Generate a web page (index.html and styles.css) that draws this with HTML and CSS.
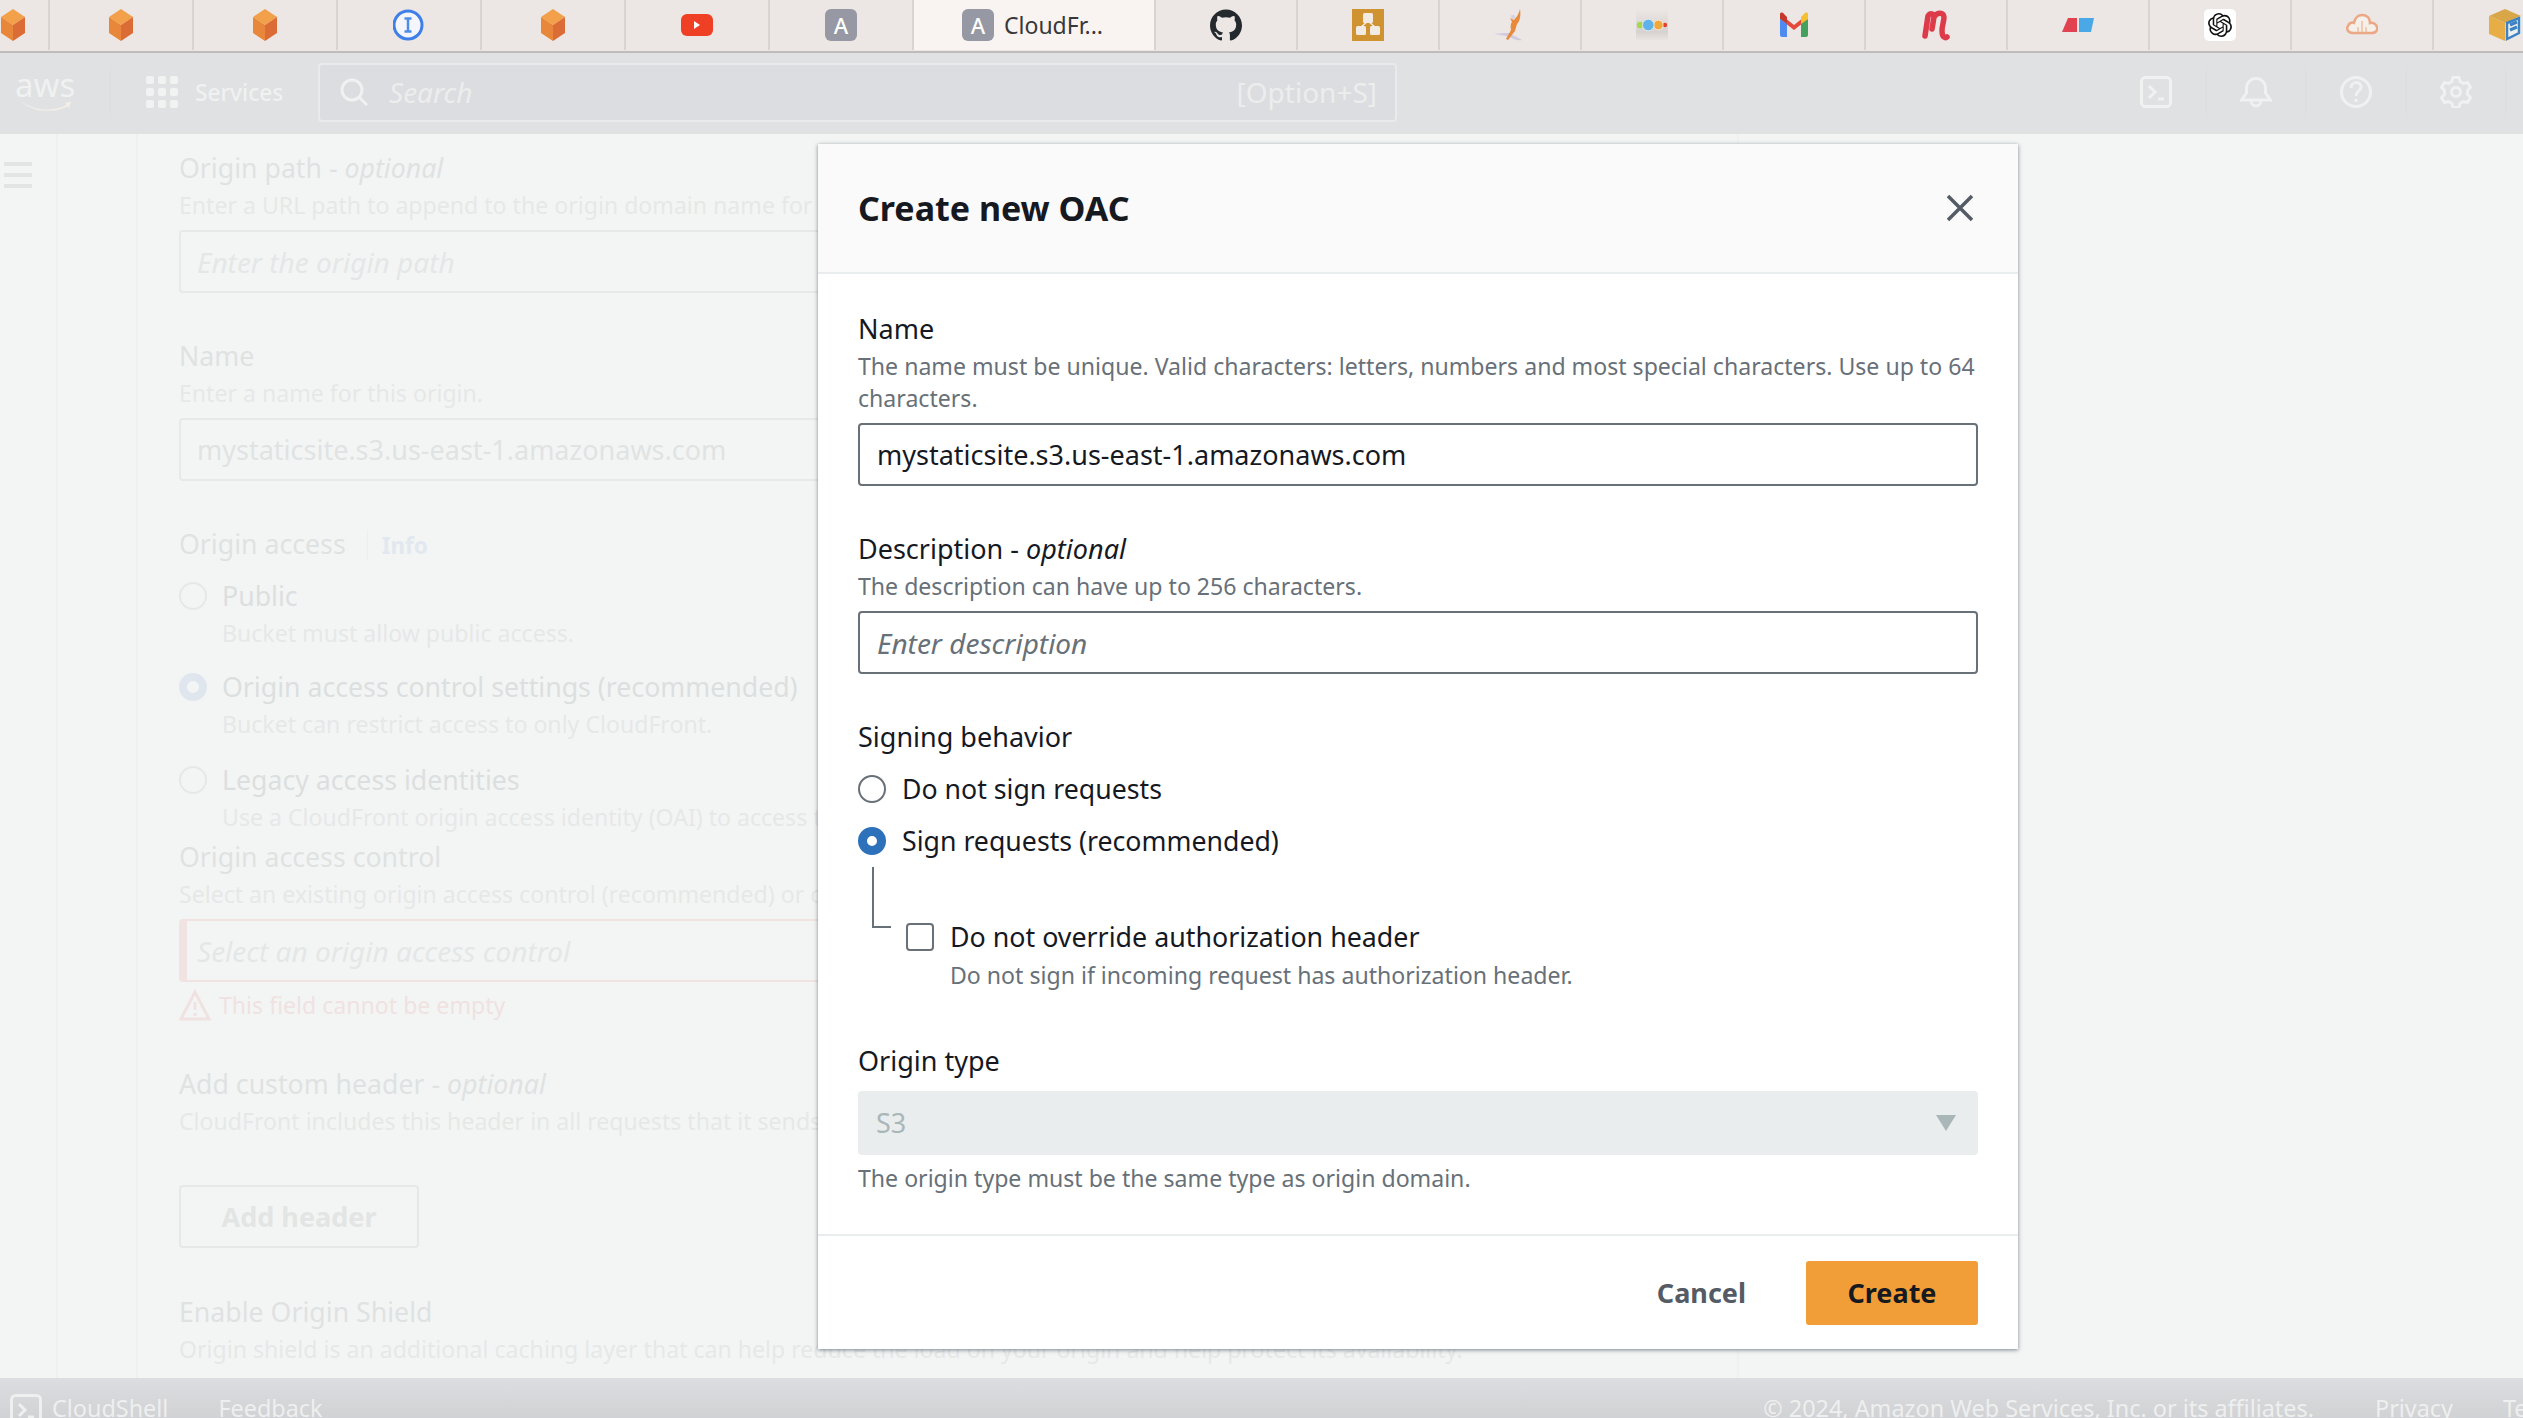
FILE: index.html
```html
<!DOCTYPE html>
<html lang="en">

<head>
    <meta charset="UTF-8">
    <meta name="viewport" content="width=device-width, initial-scale=1.0">
    <title>Create new OAC</title>
    <link rel="stylesheet" href="styles.css">
</head>

<body>
    <svg class="defs" width="0" height="0">
        <symbol id="cube" viewBox="0 0 32 32">
            <polygon points="16,0 28,8 16,16 4,8" fill="#f2a049"/>
            <polygon points="4,8 16,16 16,32 4,24" fill="#e8863a"/>
            <polygon points="28,8 16,16 16,32 28,24" fill="#dc6c35"/>
        </symbol>
    </svg>

    <!-- browser tabs -->
    <div class="tabs">
        <div class="tab tab-first"><svg class="tab-icon"><use href="#cube"/></svg></div>
        <div class="tab"><svg class="tab-icon"><use href="#cube"/></svg></div>
        <div class="tab"><svg class="tab-icon"><use href="#cube"/></svg></div>
        <div class="tab">
            <svg class="tab-icon" viewBox="0 0 32 32">
                <circle cx="15" cy="16" r="14" fill="#f4f6fb" stroke="#3f7fe8" stroke-width="3"/>
                <path d="M11.5 9.5h7M11.5 22.5h7M15 9.5v13" fill="none" stroke="#4f8ee8" stroke-width="2.5"/>
            </svg>
        </div>
        <div class="tab"><svg class="tab-icon"><use href="#cube"/></svg></div>
        <div class="tab">
            <svg class="tab-icon" viewBox="0 0 32 32">
                <rect x="0" y="5" width="32" height="22" rx="6" fill="#ef3f25"/>
                <polygon points="13,12 19,16 13,20" fill="#fff"/>
            </svg>
        </div>
        <div class="tab"><div class="badge">A</div></div>
        <div class="tab tab-active">
            <div class="badge">A</div>
            <span class="tab-title">CloudFr...</span>
        </div>
        <div class="tab tab-narrow">
            <svg class="tab-icon" viewBox="0 0 24 24">
                <path fill="#24292e" d="M12 .297c-6.63 0-12 5.373-12 12 0 5.303 3.438 9.8 8.205 11.385.6.113.82-.258.82-.577 0-.285-.01-1.04-.015-2.04-3.338.724-4.042-1.61-4.042-1.61C4.422 18.07 3.633 17.7 3.633 17.7c-1.087-.744.084-.729.084-.729 1.205.084 1.838 1.236 1.838 1.236 1.07 1.835 2.809 1.305 3.495.998.108-.776.417-1.305.76-1.605-2.665-.3-5.466-1.332-5.466-5.93 0-1.31.465-2.38 1.235-3.22-.135-.303-.54-1.523.105-3.176 0 0 1.005-.322 3.3 1.23.96-.267 1.98-.399 3-.405 1.02.006 2.04.138 3 .405 2.28-1.552 3.285-1.23 3.285-1.23.645 1.653.24 2.873.12 3.176.765.84 1.23 1.91 1.23 3.22 0 4.61-2.805 5.625-5.475 5.92.42.36.81 1.096.81 2.22 0 1.606-.015 2.896-.015 3.286 0 .315.21.69.825.57C20.565 22.092 24 17.592 24 12.297c0-6.627-5.373-12-12-12"/>
            </svg>
        </div>
        <div class="tab tab-narrow">
            <svg class="tab-icon" viewBox="0 0 32 32">
                <rect width="32" height="32" fill="#cf9431"/>
                <rect x="11" y="4" width="10" height="10" rx="1.5" fill="#f1ebe3"/>
                <rect x="4" y="17" width="10" height="9" rx="1.5" fill="#f1ebe3"/>
                <rect x="18" y="17" width="10" height="9" rx="1.5" fill="#f1ebe3"/>
                <path d="M16 12L9 18M16 12l7 6" stroke="#f1ebe3" stroke-width="1.5" fill="none"/>
            </svg>
        </div>
        <div class="tab tab-narrow">
            <svg class="tab-icon" viewBox="0 0 32 32">
                <path d="M0 25c6-1 11-1 15-1l13 7c-5 1-8-1-13-3-5-2-10-2-15-3z" fill="#cfcbe0"/>
                <path d="M26 0c1 6 0 12-3 15l-2 7-7 9-2-1 5-9c-1-4 0-7 1-8l-2-4 4 2c3-3 5-7 6-11z" fill="#e88a3a"/>
                <circle cx="19" cy="8" r="2.200" fill="#d6d2e4"/>
            </svg>
        </div>
        <div class="tab tab-narrow">
            <svg class="tab-icon" viewBox="0 0 32 32">
                <defs>
                    <linearGradient id="dots-fade" x1="0" y1="0" x2="0" y2="1">
                        <stop offset="0" stop-color="#ece6e4"/>
                        <stop offset="0.72" stop-color="#d6d2d0"/>
                        <stop offset="1" stop-color="#ece6e4"/>
                    </linearGradient>
                </defs>
                <rect width="32" height="32" fill="url(#dots-fade)"/>
                <circle cx="4" cy="16" r="3.200" fill="#a8d74f"/>
                <circle cx="29" cy="16" r="2.200" fill="#e2402d"/>
                <circle cx="22.300" cy="16" r="4.800" fill="#f0a83a" stroke="#f2eeea" stroke-width="0.8"/>
                <circle cx="12.300" cy="16" r="5.800" fill="#5fb2ea" stroke="#f2eeea" stroke-width="0.8"/>
            </svg>
        </div>
        <div class="tab tab-narrow">
            <svg class="tab-icon" viewBox="0 0 32 32">
                <path d="M2 5l14 11L30 5v5L16 21 2 10z" fill="#e5483a"/>
                <path d="M2 5c0-2 3-2 4 0l3 3v7L2 10z" fill="#c5382c"/>
                <path d="M2 10l7 5v13H4c-1 0-2-1-2-2z" fill="#4e8bf0"/>
                <path d="M30 10l-7 5v13h5c1 0 2-1 2-2z" fill="#44a05c"/>
                <path d="M30 5c0-2-3-2-4 0l-3 3v7l7-5z" fill="#f5bf32"/>
            </svg>
        </div>
        <div class="tab tab-narrow">
            <svg class="tab-icon" viewBox="0 0 32 32">
                <path d="M5 27L8 7c2-3 6-3 6 1l-2 12M14 8c3-5 10-5 10 0 0 6-4 13-1 19 1 2 3 2 4 1" fill="none" stroke="#dd3a4a" stroke-width="5.500" stroke-linecap="round" stroke-linejoin="round"/>
            </svg>
        </div>
        <div class="tab tab-narrow">
            <svg class="tab-icon" viewBox="0 0 32 32">
                <polygon points="6,9 15,9 15,23 0,23" fill="#e2424f"/>
                <polygon points="17,9 32,9 29,23 17,23" fill="#4aa8e6"/>
            </svg>
        </div>
        <div class="tab tab-narrow">
            <svg class="tab-icon" viewBox="-4 -4 32 32">
                <rect x="-4" y="-4" width="32" height="32" rx="5" fill="#fff"/>
                <path fill="#111" d="M22.2819 9.8211a5.9847 5.9847 0 0 0-.5157-4.9108 6.0462 6.0462 0 0 0-6.5098-2.9A6.0651 6.0651 0 0 0 4.9807 4.1818a5.9847 5.9847 0 0 0-3.9977 2.9 6.0462 6.0462 0 0 0 .7427 7.0966 5.98 5.98 0 0 0 .511 4.9107 6.051 6.051 0 0 0 6.5146 2.9001A5.9847 5.9847 0 0 0 13.2599 24a6.0557 6.0557 0 0 0 5.7718-4.2058 5.9894 5.9894 0 0 0 3.9977-2.9001 6.0557 6.0557 0 0 0-.7475-7.0729zm-9.022 12.6081a4.4755 4.4755 0 0 1-2.8764-1.0408l.1419-.0804 4.7783-2.7582a.7948.7948 0 0 0 .3927-.6813v-6.7369l2.02 1.1686a.071.071 0 0 1 .038.052v5.5826a4.504 4.504 0 0 1-4.4945 4.4944zm-9.6607-4.1254a4.4708 4.4708 0 0 1-.5346-3.0137l.142.0852 4.783 2.7582a.7712.7712 0 0 0 .7806 0l5.8428-3.3685v2.3324a.0804.0804 0 0 1-.0332.0615L9.74 19.9502a4.4992 4.4992 0 0 1-6.1408-1.6464zM2.3408 7.8956a4.485 4.485 0 0 1 2.3655-1.9728V11.6a.7664.7664 0 0 0 .3879.6765l5.8144 3.3543-2.0201 1.1685a.0757.0757 0 0 1-.071 0l-4.8303-2.7865A4.504 4.504 0 0 1 2.3408 7.872zm16.5963 3.8558L13.1038 8.364 15.1192 7.2a.0757.0757 0 0 1 .071 0l4.8303 2.7913a4.4944 4.4944 0 0 1-.6765 8.1042v-5.6772a.79.79 0 0 0-.407-.667zm2.0107-3.0231l-.142-.0852-4.7735-2.7818a.7759.7759 0 0 0-.7854 0L9.409 9.2297V6.8974a.0662.0662 0 0 1 .0284-.0615l4.8303-2.7866a4.4992 4.4992 0 0 1 6.6802 4.66zM8.3065 12.863l-2.02-1.1638a.0804.0804 0 0 1-.038-.0567V6.0742a4.4992 4.4992 0 0 1 7.3757-3.4537l-.142.0805L8.704 5.459a.7948.7948 0 0 0-.3927.6813zm1.0976-2.3654l2.602-1.4998 2.6069 1.4998v2.9994l-2.5974 1.4997-2.6067-1.4997Z"/>
            </svg>
        </div>
        <div class="tab tab-narrow">
            <svg class="tab-icon" viewBox="0 0 32 32">
                <path d="M7 24C2 24 0 20 2 17c1-3 4-4 6-3 1-6 5-8 8-8 5 0 8 3 8 8 3-1 6 1 7 4 1 4-2 6-5 6z" fill="#f6f0ea" stroke="#eba884" stroke-width="2.500"/>
                <path d="M12 23v-5M16 23V12M20 23v-5" stroke="#eec0a4" stroke-width="1.500"/>
            </svg>
        </div>
        <div class="tab tab-narrow tab-last">
            <svg class="tab-icon" viewBox="0 0 32 32">
                <polygon points="16,0 32,7 16,14 0,7" fill="#d9a648"/>
                <polygon points="0,7 16,14 16,32 0,25" fill="#e7ae48"/>
                <polygon points="32,7 16,14 16,32 32,25" fill="#eef0ee"/>
                <path d="M18 14l12-5v15l-12 6z" fill="none" stroke="#3d83c4" stroke-width="2.500"/>
                <path d="M21 16l7-3M21 21l7-3" stroke="#3d83c4" stroke-width="3"/>
            </svg>
        </div>
    </div>

    <!-- console nav -->
    <nav class="topnav">
        <div class="logo">
            <span class="logo-text">aws</span>
            <svg class="logo-smile" viewBox="0 0 60 16">
                <path d="M1 1c16 12 38 12 52 5l-1-3 7-1-3 7-1-2C41 15 15 15 1 1z" fill="#f3eee8"/>
            </svg>
        </div>
        <svg class="nav-grid" viewBox="0 0 32 32">
            <rect width="8" height="8" rx="2"/><rect x="12" width="8" height="8" rx="2"/><rect x="24" width="8" height="8" rx="2"/>
            <rect y="12" width="8" height="8" rx="2"/><rect x="12" y="12" width="8" height="8" rx="2"/><rect x="24" y="12" width="8" height="8" rx="2"/>
            <rect y="24" width="8" height="8" rx="2"/><rect x="12" y="24" width="8" height="8" rx="2"/><rect x="24" y="24" width="8" height="8" rx="2"/>
        </svg>
        <span class="nav-services">Services</span>
        <div class="search">
            <svg class="search-icon" viewBox="0 0 28 28">
                <circle cx="12" cy="12" r="10" fill="none" stroke="#f0f1f1" stroke-width="3"/>
                <path d="M19 19l8 8" stroke="#f0f1f1" stroke-width="3"/>
            </svg>
            <span class="search-text">Search</span>
            <span class="search-key">[Option+S]</span>
        </div>
        <div class="nav-actions">
            <div class="nav-cell">
                <svg class="nav-icon" viewBox="0 0 32 32">
                    <rect x="1.500" y="1.500" width="29" height="29" rx="4"/>
                    <path d="M9 10l6 6-6 6M18 23h6"/>
                </svg>
            </div>
            <div class="nav-cell">
                <svg class="nav-icon" viewBox="0 0 32 32">
                    <path d="M1.500 24h29l-5-7V12a9.500 9.500 0 0 0-19 0v5zM16 3V1M11 25a5 5 0 0 0 10 0"/>
                </svg>
            </div>
            <div class="nav-cell">
                <svg class="nav-icon" viewBox="0 0 32 32">
                    <circle cx="16" cy="16" r="14.500"/>
                    <path d="M11 12c0-7 10-7 10-1 0 4-5 4-5 9M16 23v3"/>
                </svg>
            </div>
            <div class="nav-cell">
                <svg class="nav-icon" viewBox="0 0 32 32">
                    <path d="M13 1.500h6l1 4 3.500 2 4-1 3 5-3 3v4l3 3-3 5-4-1-3.500 2-1 4h-6l-1-4-3.500-2-4 1-3-5 3-3v-4l-3-3 3-5 4 1 3.500-2z"/>
                    <circle cx="16" cy="16" r="4.500"/>
                </svg>
            </div>
        </div>
    </nav>

    <!-- page under the dialog -->
    <div class="page">
        <aside class="side">
            <div class="burger"><span></span><span></span><span></span></div>
        </aside>
        <div class="gutter"></div>
        <main class="content">
            <div class="bg-label">Origin path - <em>optional</em></div>
            <div class="bg-help">Enter a URL path to append to the origin domain name for your origin requests.</div>
            <div class="bg-input bg-placeholder">Enter the origin path</div>

            <div class="bg-label bg-gap">Name</div>
            <div class="bg-help">Enter a name for this origin.</div>
            <div class="bg-input">mystaticsite.s3.us-east-1.amazonaws.com</div>

            <div class="bg-label bg-gap">Origin access <span class="bg-info">Info</span></div>
            <div class="bg-radio bg-radio-first"><span class="bg-dot"></span>Public</div>
            <div class="bg-help bg-indent">Bucket must allow public access.</div>
            <div class="bg-radio"><span class="bg-dot bg-dot-on"></span>Origin access control settings (recommended)</div>
            <div class="bg-help bg-indent">Bucket can restrict access to only CloudFront.</div>
            <div class="bg-radio bg-radio-last"><span class="bg-dot"></span>Legacy access identities</div>
            <div class="bg-help bg-indent">Use a CloudFront origin access identity (OAI) to access the S3 bucket.</div>

            <div class="bg-label bg-tight">Origin access control</div>
            <div class="bg-help">Select an existing origin access control (recommended) or create a new control.</div>
            <div class="bg-input bg-error bg-placeholder">Select an origin access control</div>
            <div class="bg-warning">
                <svg class="bg-warning-icon" viewBox="0 0 32 32">
                    <path d="M16 3L2 30h28zM16 13v8M16 24v3" fill="none" stroke="#efe2e1" stroke-width="3"/>
                </svg>
                This field cannot be empty
            </div>

            <div class="bg-label bg-gap">Add custom header - <em>optional</em></div>
            <div class="bg-help">CloudFront includes this header in all requests that it sends to your origin.</div>
            <div class="bg-button">Add header</div>

            <div class="bg-label bg-gap-large">Enable Origin Shield</div>
            <div class="bg-help">Origin shield is an additional caching layer that can help reduce the load on your origin and help protect its availability.</div>
        </main>
    </div>

    <footer class="footer">
        <svg class="footer-icon" viewBox="0 0 32 32">
            <rect x="1.500" y="1.500" width="29" height="29" rx="4"/>
            <path d="M9 10l6 6-6 6M18 23h6"/>
        </svg>
        <span class="footer-shell">CloudShell</span>
        <span class="footer-feedback">Feedback</span>
        <span class="footer-copy">© 2024, Amazon Web Services, Inc. or its affiliates.</span>
        <span class="footer-privacy">Privacy</span>
        <span class="footer-terms">Terms</span>
    </footer>

    <!-- dialog -->
    <div class="modal">
        <div class="modal-head">
            <h2 class="modal-title">Create new OAC</h2>
            <svg class="modal-close" viewBox="0 0 28 28">
                <path d="M2 2l24 24M26 2L2 26" stroke="#545b64" stroke-width="3.500" fill="none"/>
            </svg>
        </div>
        <div class="modal-body">
            <div class="label">Name</div>
            <div class="help">The name must be unique. Valid characters: letters, numbers and most special characters. Use up to 64 characters.</div>
            <div class="input input-name">mystaticsite.s3.us-east-1.amazonaws.com</div>

            <div class="label field-gap">Description - <em>optional</em></div>
            <div class="help">The description can have up to 256 characters.</div>
            <div class="input input-empty">Enter description</div>

            <div class="label field-gap">Signing behavior</div>
            <div class="radio radio-first"><span class="dot"></span>Do not sign requests</div>
            <div class="radio"><span class="dot dot-on"></span>Sign requests (recommended)</div>
            <div class="nested">
                <div class="tree-line"></div>
                <div class="nested-body">
                    <div class="check"><span class="box"></span>Do not override authorization header</div>
                    <div class="help help-indent">Do not sign if incoming request has authorization header.</div>
                </div>
            </div>

            <div class="label origin-label">Origin type</div>
            <div class="select">
                <span>S3</span>
                <svg class="select-arrow" viewBox="0 0 20 16"><polygon points="0,0 20,0 10,16" fill="#aab7b8"/></svg>
            </div>
            <div class="help help-after">The origin type must be the same type as origin domain.</div>
        </div>
        <div class="modal-foot">
            <button class="btn-cancel">Cancel</button>
            <button class="btn-create">Create</button>
        </div>
    </div>
</body>

</html>
```

FILE: styles.css
```css
* {
    box-sizing: border-box;
}

html,
body {
    margin: 0;
    height: 100%;
}

body {
    display: flex;
    flex-direction: column;
    height: 1418px;
    overflow: hidden;
    position: relative;
    font-family: "Noto Sans", "Open Sans", sans-serif;
    font-size: 23.1px;
    background: #f3f5f4;
}

.defs {
    position: absolute;
}

/* browser tabs */
.tabs {
    display: flex;
    flex: none;
    height: 53px;
    padding-bottom: 1px;
    background: #ece6e4;
    border-bottom: 2px solid #bdbcbb;
    overflow: hidden;
}

.tab {
    display: flex;
    flex: none;
    align-items: center;
    justify-content: center;
    width: 144px;
    border-right: 2px solid #d9d4d1;
}

.tab-first {
    width: 50px;
    justify-content: flex-start;
}

.tab-first .tab-icon {
    margin-left: -3px;
}

.tab-narrow {
    width: 142px;
}

.tab-last {
    border-right: 0;
    width: 90px;
    justify-content: flex-start;
    padding-left: 55px;
}

.tab-active {
    width: 242px;
    background: #f9f4f1;
    justify-content: flex-start;
    padding-left: 48px;
}

.tab-icon {
    flex: none;
    width: 32px;
    height: 32px;
}

.badge {
    display: flex;
    flex: none;
    align-items: center;
    justify-content: center;
    width: 32px;
    height: 32px;
    border-radius: 6px;
    background: #9698a4;
    color: #fff;
    font-size: 22px;
    font-weight: 500;
}

.tab-title {
    margin-left: 10px;
    font-size: 23px;
    color: #38383a;
    white-space: nowrap;
}

/* console nav */
.topnav {
    display: flex;
    flex: none;
    align-items: center;
    height: 81px;
    padding-bottom: 3px;
    background: #dfe1e3;
    color: #f0f1f1;
}

.logo {
    display: flex;
    flex: none;
    flex-direction: column;
    width: 111px;
    height: 44px;
    padding-left: 15px;
    border-right: 2px solid #dcdfe1;
}

.logo-text {
    font-size: 33px;
    line-height: 30px;
    color: #f0f1f1;
}

.logo-smile {
    width: 62px;
    height: 16px;
}

.nav-grid {
    flex: none;
    width: 32px;
    height: 32px;
    margin-left: 35px;
    fill: #f1f3f3;
}

.nav-services {
    flex: none;
    width: 123px;
    margin-left: 17px;
    font-size: 22.700px;
    font-weight: 500;
    color: #f0f1f1;
}

.search {
    display: flex;
    flex: none;
    align-items: center;
    width: 1079px;
    height: 59px;
    padding: 0 18px 0 20px;
    background: #dcdde0;
    border: 2px solid #e9eaeb;
    border-radius: 4px;
    color: #eceded;
    font-size: 28px;
}

.search-icon {
    width: 28px;
    height: 28px;
}

.search-text {
    margin-left: 21px;
    font-style: italic;
}

.search-key {
    margin-left: auto;
}

.nav-actions {
    display: flex;
    margin-left: auto;
    margin-right: 16px;
}

.nav-cell {
    display: flex;
    align-items: center;
    justify-content: center;
    width: 100px;
    height: 44px;
    border-right: 2px solid #dcdfe1;
}

.nav-icon {
    width: 32px;
    height: 32px;
    fill: none;
    stroke: #f0f1f1;
    stroke-width: 3;
}

/* page under the dialog */
.page {
    display: grid;
    flex: none;
    grid-template-columns: 58px 80px 1601px;
    height: 1244px;
    overflow: hidden;
    color: #dfe2e2;
}

.side {
    padding: 28px 0 0 4px;
    border-right: 2px solid #eff1f0;
}

.burger {
    display: flex;
    flex-direction: column;
    gap: 7px;
    width: 28px;
}

.burger span {
    height: 4px;
    background: #e3e5e5;
}

.gutter {
    border-right: 2px solid #eff1f0;
}

.content {
    padding: 18px 0 0 41px;
    border-right: 2px solid #eff1f0;
    line-height: 32px;
}

.bg-label {
    height: 32px;
    font-size: 26.700px;
    white-space: nowrap;
}

.bg-gap {
    margin-top: 47px;
}

.bg-gap-large {
    margin-top: 48px;
}

.bg-tight {
    margin-top: 8px;
}

.bg-info {
    margin-left: 14px;
    padding-left: 14px;
    border-left: 1px solid #edefee;
    font-size: 22.500px;
    font-weight: 700;
    color: #e2e8ef;
}

.bg-help {
    height: 32px;
    margin-top: 5px;
    color: #e6e8e8;
    white-space: nowrap;
}

.bg-indent {
    padding-left: 43px;
}

.bg-input {
    display: flex;
    align-items: center;
    height: 63px;
    margin-top: 9px;
    padding-left: 16px;
    border: 2px solid #e7e9e9;
    border-radius: 4px;
    font-size: 27px;
    color: #e0e3e3;
}

.bg-placeholder {
    font-size: 28px;
    font-style: italic;
    color: #e4e7e7;
}

.bg-error {
    border-color: #f1e3e2;
    border-left-width: 8px;
    padding-left: 10px;
}

.bg-radio {
    display: flex;
    align-items: center;
    height: 32px;
    margin-top: 22px;
    font-size: 26.700px;
    color: #dcdfdf;
    white-space: nowrap;
}

.bg-radio-first {
    margin-top: 20px;
}

.bg-radio-last {
    margin-top: 24px;
}

.bg-dot {
    flex: none;
    width: 28px;
    height: 28px;
    margin-right: 15px;
    border: 2px solid #e6e8e8;
    border-radius: 50%;
}

.bg-dot-on {
    border: 8px solid #dfe6ee;
    background: #f3f5f4;
}

.bg-warning {
    display: flex;
    align-items: center;
    height: 32px;
    margin-top: 7px;
    color: #efe2e1;
}

.bg-warning-icon {
    width: 32px;
    height: 32px;
    margin-right: 8px;
}

.bg-button {
    display: flex;
    align-items: center;
    justify-content: center;
    width: 240px;
    height: 63px;
    margin-top: 48px;
    border: 2px solid #e6e8e8;
    border-radius: 4px;
    font-size: 27px;
    font-weight: 700;
    color: #e3e5e5;
}

/* bottom bar */
.footer {
    display: flex;
    flex: 1;
    align-items: flex-start;
    padding-top: 14px;
    background: linear-gradient(#dcdde0, #cfd0d2);
    font-size: 23.400px;
    line-height: 32px;
    color: #eeefef;
    white-space: nowrap;
}

.footer-icon {
    flex: none;
    width: 32px;
    height: 32px;
    margin: 2px 0 0 10px;
    fill: none;
    stroke: #eeefef;
    stroke-width: 3;
}

.footer-shell {
    margin-left: 10px;
}

.footer-feedback {
    margin-left: 50px;
}

.footer-copy {
    margin-left: auto;
}

.footer-privacy {
    margin-left: 61px;
}

.footer-terms {
    flex: none;
    width: 20px;
    margin-left: 50px;
}

/* dialog */
.modal {
    position: absolute;
    top: 144px;
    left: 818px;
    display: flex;
    flex-direction: column;
    width: 1200px;
    height: 1205px;
    background: #fff;
    box-shadow: 0 1px 4px rgba(0, 20, 40, 0.5);
    color: #16191f;
}

.modal-head {
    display: flex;
    flex: none;
    align-items: center;
    justify-content: space-between;
    height: 130px;
    padding: 0 44px 0 40px;
    background: #fafafa;
    border-bottom: 2px solid #eaeded;
}

.modal-title {
    margin: 0;
    font-size: 34px;
    font-weight: 700;
}

.modal-close {
    width: 28px;
    height: 28px;
}

.modal-body {
    flex: none;
    height: 962px;
    padding: 39px 40px 0;
    border-bottom: 2px solid #eaeded;
    line-height: 32px;
}

.label {
    font-size: 27px;
}

.field-gap {
    margin-top: 47px;
}

.help {
    margin-top: 5px;
    color: #687078;
}

.input {
    display: flex;
    align-items: center;
    height: 63px;
    margin-top: 9px;
    padding-left: 17px;
    border: 2px solid #687078;
    border-radius: 4px;
    font-size: 27px;
}

.input-empty {
    font-size: 28px;
    font-style: italic;
    color: #687078;
}

.radio {
    display: flex;
    align-items: center;
    margin-top: 20px;
    font-size: 26.700px;
}

.dot {
    flex: none;
    width: 28px;
    height: 28px;
    margin-right: 16px;
    border: 2px solid #687078;
    border-radius: 50%;
}

.dot-on {
    border: 9px solid #2c71b9;
}

.nested {
    display: flex;
    margin-top: 10px;
}

.tree-line {
    flex: none;
    width: 19px;
    height: 61px;
    margin-left: 14px;
    border-left: 2px solid #687078;
    border-bottom: 2px solid #687078;
}

.nested-body {
    margin: 54px 0 0 15px;
}

.check {
    display: flex;
    align-items: center;
    font-size: 26.800px;
}

.box {
    flex: none;
    width: 28px;
    height: 28px;
    margin-right: 16px;
    border: 2px solid #687078;
    border-radius: 4px;
}

.help-indent {
    margin-top: 6px;
    padding-left: 44px;
}

.origin-label {
    margin-top: 54px;
}

.select {
    display: flex;
    align-items: center;
    justify-content: space-between;
    height: 64px;
    margin-top: 14px;
    padding: 0 22px 0 18px;
    background: #eaeded;
    border-radius: 4px;
    font-size: 27px;
    color: #aab7b8;
}

.select-arrow {
    width: 20px;
    height: 16px;
}

.help-after {
    margin-top: 7px;
}

.modal-foot {
    display: flex;
    flex: none;
    align-items: center;
    justify-content: flex-end;
    height: 113px;
    padding: 0 40px 0 0;
}

.btn-cancel,
.btn-create {
    font-family: inherit;
    font-size: 27px;
    font-weight: 700;
    border: 0;
    border-radius: 3px;
}

.btn-cancel {
    margin-right: 60px;
    padding: 0;
    background: none;
    color: #545b64;
}

.btn-create {
    width: 172px;
    height: 64px;
    background: #f29e38;
    color: #16191f;
}
```
